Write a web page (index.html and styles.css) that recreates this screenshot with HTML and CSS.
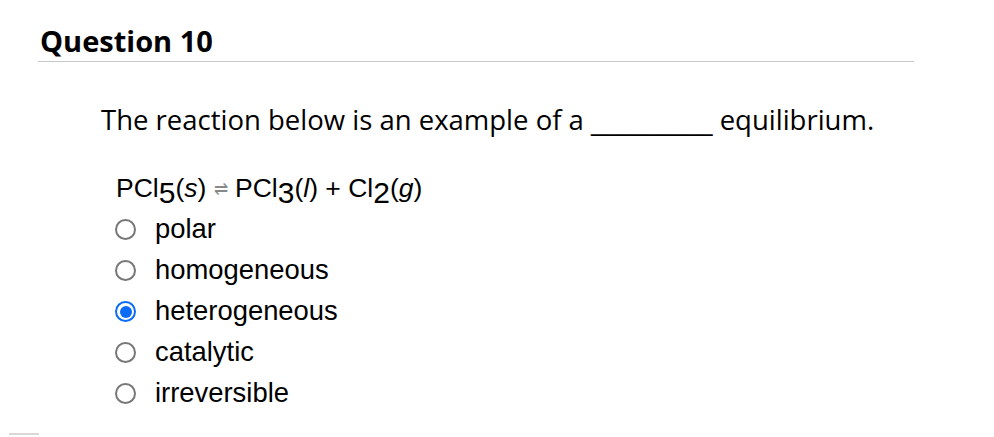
FILE: index.html
```html
<!DOCTYPE html>
<html>
<head>
<meta charset="utf-8">
<link rel="stylesheet" href="styles.css">
</head>
<body>
<div class="page">
  <h2 class="qtitle">Question 10</h2>
  <div class="qbody">
    <p class="prompt">The reaction below is an example of a <span class="blank">_________</span> equilibrium.</p>
    <p class="eq">PCl<span class="sub">5</span>(<i>s</i>) <span class="arrow">&#8652;</span>&nbsp;PCl<span class="sub">3</span>(<i>l</i>) + Cl<span class="sub">2</span>(<i>g</i>)</p>
    <ul class="options">
      <li class="opt"><span class="radio"></span><span class="label">polar</span></li>
      <li class="opt"><span class="radio"></span><span class="label">homogeneous</span></li>
      <li class="opt"><span class="radio checked"></span><span class="label">heterogeneous</span></li>
      <li class="opt"><span class="radio"></span><span class="label">catalytic</span></li>
      <li class="opt"><span class="radio"></span><span class="label">irreversible</span></li>
    </ul>
  </div>
  <div class="footbar"></div>
</div>
</body>
</html>
```
FILE: styles.css
```css
html, body {
  margin: 0;
  padding: 0;
  background: #fff;
}
.page {
  position: relative;
  width: 994px;
  height: 437px;
  overflow: hidden;
  color: #000;
}
.qtitle {
  margin: 0 0 0 38px;
  width: 874px;
  padding: 24px 0 4px 2px;
  font-family: "Open Sans", sans-serif;
  font-weight: 700;
  font-size: 29px;
  line-height: 33px;
  border-bottom: 1px solid #c8c8c8;
}
.qbody {
  padding-left: 101px;
}
.prompt {
  margin: 40px 0 0 0;
  font-family: "Open Sans", sans-serif;
  font-size: 27.5px;
  line-height: 35px;
}
.blank {
  font-family: "DejaVu Sans", sans-serif;
  font-size: 27px;
}
.eq {
  margin: 33px 0 0 15px;
  font-family: "Liberation Sans", Arial, sans-serif;
  font-size: 26.5px;
  line-height: 32px;
}
.eq .sub {
  position: relative;
  top: 6px;
  font-size: 30px;
}
.eq i {
  font-style: italic;
}
.arrow {
  font-size: 17px;
  color: #888;
  position: relative;
  top: -2px;
}
.options {
  list-style: none;
  margin: 1px 0 0 14px;
  padding: 0;
}
.opt {
  display: flex;
  align-items: center;
  height: 41px;
  font-family: "Liberation Sans", Arial, sans-serif;
  font-size: 27.4px;
}
.radio {
  width: 17px;
  height: 17px;
  border: 2px solid #777;
  border-radius: 50%;
  box-sizing: content-box;
  flex: none;
  position: relative;
  margin-right: 19px;
}
.radio.checked {
  border-color: #0a6cf5;
}
.radio.checked::after {
  content: "";
  position: absolute;
  left: 2.5px;
  top: 2.5px;
  width: 12px;
  height: 12px;
  border-radius: 50%;
  background: #0a6cf5;
}
.label {
  position: relative;
  top: -1px;
}
.footbar {
  position: absolute;
  left: 9px;
  top: 433px;
  width: 30px;
  height: 2px;
  background: #d8d8d8;
}
```
